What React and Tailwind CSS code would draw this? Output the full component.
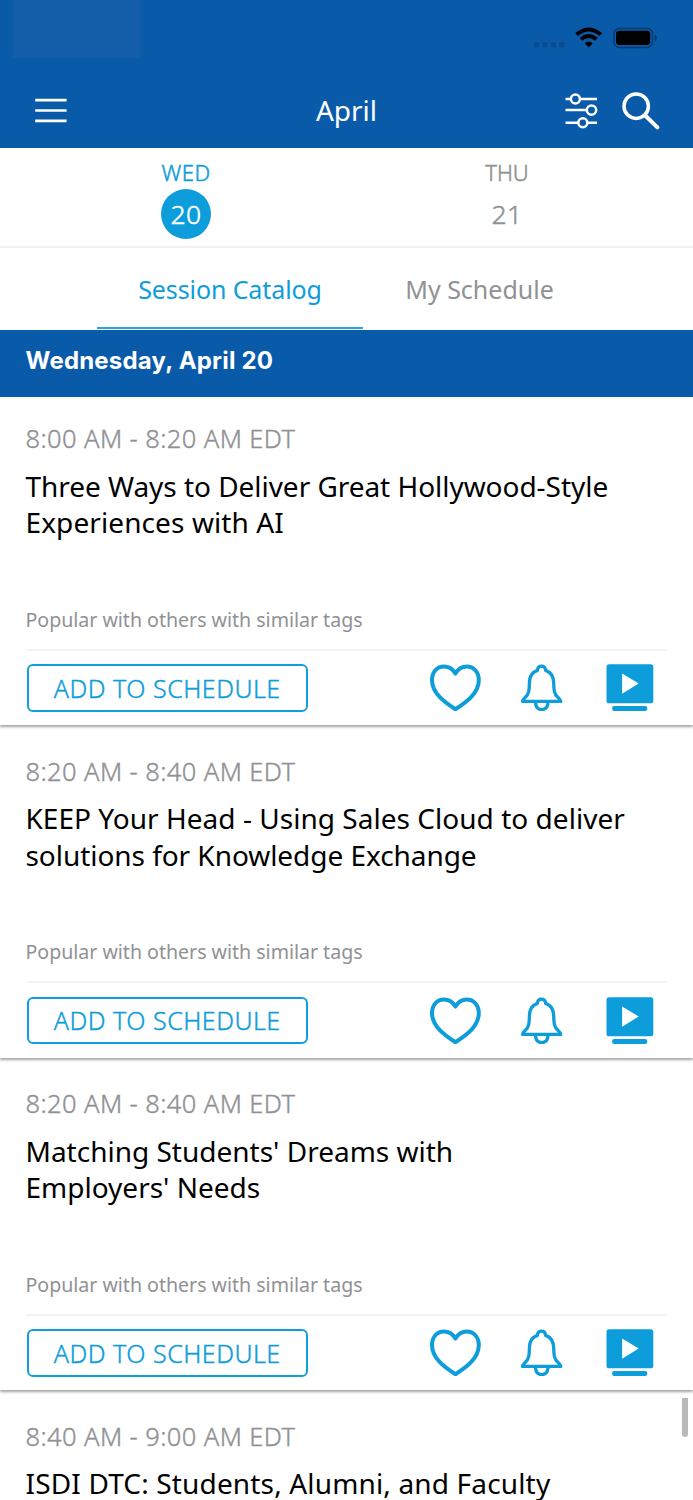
import React from "react";

const sessions = [
  {
    time: "8:00 AM - 8:20 AM EDT",
    lines: [
      { text: "Three Ways to Deliver Great Hollywood-Style", tracking: "tracking-[-0.04px]" },
      { text: "Experiences with AI", tracking: "tracking-[0.1px]" },
    ],
  },
  {
    time: "8:20 AM - 8:40 AM EDT",
    lines: [
      { text: "KEEP Your Head - Using Sales Cloud to deliver", tracking: "tracking-[0.03px]" },
      { text: "solutions for Knowledge Exchange", tracking: "tracking-[-0.05px]" },
    ],
  },
  {
    time: "8:20 AM - 8:40 AM EDT",
    lines: [
      { text: "Matching Students' Dreams with", tracking: "tracking-[0px]" },
      { text: "Employers' Needs", tracking: "tracking-[0px]" },
    ],
  },
  {
    time: "8:40 AM - 9:00 AM EDT",
    lines: [{ text: "ISDI DTC: Students, Alumni, and Faculty", tracking: "tracking-[0.16px]" }],
  },
];

function StatusIcons() {
  return (
    <svg className="block h-6 w-[126px]" viewBox="532 26 126 24" fill="none">
      <g fill="#084b8f">
        <rect x="534" y="42" width="5.4" height="5.6" rx="1.6" />
        <rect x="542.4" y="42" width="5.4" height="5.6" rx="1.6" />
        <rect x="550.8" y="42" width="5.4" height="5.6" rx="1.6" />
        <rect x="559" y="42" width="5.4" height="5.6" rx="1.6" />
      </g>
      <g stroke="#000" strokeWidth="3.9">
        <path d="M576.6 34.6Q588.7 24.4 600.8 34.6" />
        <path d="M581 39.4Q588.7 32.6 596.4 39.4" />
      </g>
      <path d="M584.6 43.2Q588.7 39.8 592.8 43.2L588.7 47.4Z" fill="#000" />
      <rect x="613.9" y="28.4" width="38.6" height="19" rx="5.5" stroke="#08396c" strokeWidth="1.5" />
      <rect x="616" y="30.8" width="34.2" height="14.2" rx="3.4" fill="#000" />
      <path d="M655 34.6C657.6 36 657.6 40 655 41.4Z" fill="#08396c" />
    </svg>
  );
}

function MenuIcon() {
  return (
    <svg className="block h-[26px] w-8" viewBox="35 97.4 32 26" stroke="#fff" strokeWidth="2.7">
      <path d="M35.2 99.6H66.6M35.2 109.9H66.6M35.2 120.2H66.6" />
    </svg>
  );
}

function FilterIcon() {
  return (
    <svg className="block h-9 w-9" viewBox="563 92.5 36 36" fill="none" stroke="#fff" strokeWidth="2.5">
      <path d="M565.5 98.5H571M580 98.5H597M565.5 109.6H587M565.5 122.3H578.3M587.3 122.3H597" />
      <circle cx="575.4" cy="98.5" r="4.5" />
      <circle cx="591.5" cy="109.6" r="4.7" />
      <circle cx="582.8" cy="122.3" r="4.5" />
    </svg>
  );
}

function SearchIcon() {
  return (
    <svg className="block h-10 w-10" viewBox="621 90.8 40 40" fill="none" stroke="#fff">
      <circle cx="636.2" cy="106" r="12.2" strokeWidth="3.5" />
      <path d="M645 115L657.4 127.2" strokeWidth="4" strokeLinecap="round" />
    </svg>
  );
}

function HeartIcon() {
  return (
    <svg className="block h-12 w-[52px]" viewBox="429 663 52 48" fill="none" stroke="#0d9ddb" strokeWidth="4" strokeLinejoin="round">
      <path d="M455.4 673.6C452.6 668.6 448.4 666.5 444 666.5C437 666.5 432 672 432 680C432 693.5 445 702.5 455.4 709.2C466 702.5 478.8 693.5 478.8 680C478.8 672 473.6 666.5 466.8 666.5C462.4 666.5 458.2 668.6 455.4 673.6Z" />
    </svg>
  );
}

function BellIcon() {
  return (
    <svg className="block h-12 w-[43px]" viewBox="519.5 663.2 43 48" fill="none" stroke="#0d9ddb" strokeWidth="3.3" strokeLinejoin="round">
      <path d="M541 666.3C538.7 666.3 537.1 667.8 536.9 670.6C531.5 672.5 529 677.5 528.9 683C528.8 690.5 528.5 694 524.8 697.5C523 699.3 522 700.3 522 701.6H560.3C560.3 700.3 559.2 699.3 557.4 697.5C553.6 694 553.4 690.5 553.2 683C553 677.5 550.6 672.5 545.1 670.6C544.9 667.8 543.3 666.3 541 666.3Z" />
      <path d="M534.9 702C535 707 537.4 709.8 541.2 709.8C545 709.8 547.5 707 547.6 702" />
    </svg>
  );
}

function PlayIcon() {
  return (
    <svg className="block h-12 w-12" viewBox="605.5 663.6 48 48" fill="#0d9ddb">
      <rect x="606" y="664.8" width="46.8" height="39.1" rx="2.6" />
      <rect x="611.6" y="706.6" width="35.2" height="5" rx="2.2" />
      <path d="M621.6 674.1V694.3L638.2 684.2Z" fill="#fff" />
    </svg>
  );
}

function SessionCard({ session, first }) {
  return (
    <article
      className={
        "w-full shrink-0 bg-white shadow-[0_2px_2.5px_rgba(0,0,0,0.36)] " +
        (first ? "h-[328px] pt-[24px]" : "h-[325px] pt-[21px]")
      }
    >
      <div className="pr-[27px] pl-[25.5px]">
        <p className="h-[34px] text-[25.5px] leading-[34px] font-light tracking-[0.4px] whitespace-nowrap text-[#919195] [-webkit-text-stroke:0.4px]">
          {session.time}
        </p>
        <h2 className="mt-[12.5px] h-[131px] text-[28px] leading-[36.3px] font-normal text-black">
          {session.lines.map((line) => (
            <span key={line.text} className={"block whitespace-nowrap " + line.tracking}>
              {line.text}
            </span>
          ))}
        </h2>
        <p className="mt-[5px] h-8 text-[19.6px] leading-8 font-normal tracking-[-0.02px] whitespace-nowrap text-[#919195]">
          Popular with others with similar tags
        </p>
        <div className="mt-[13px] h-[2px] bg-[#f2f2f7]" />
        <div className="flex items-center pt-3">
          <button className="mt-[1.5px] ml-[1px] h-[47.5px] w-[281.5px] rounded-[6px] border-2 border-[#119fdc] text-[25px] leading-[43px] font-light tracking-[0.5px] whitespace-nowrap text-[#0d9ddb] [-webkit-text-stroke:0.4px]">
            ADD TO SCHEDULE
          </button>
          <div className="ml-auto flex items-center pr-[12.5px]">
            <HeartIcon />
            <span className="w-[38.5px]" />
            <BellIcon />
            <span className="w-[43px]" />
            <PlayIcon />
          </div>
        </div>
      </div>
    </article>
  );
}

export default function App() {
  return (
    <div className="relative flex h-[1500px] w-[693px] flex-col overflow-hidden bg-white font-['Noto_Sans',sans-serif]">
      <header className="relative flex h-[147.5px] shrink-0 flex-col bg-[#0a5aaa]">
        <div className="flex h-[73px] items-start justify-between pl-[13px] pr-[35px]">
          <div className="h-[58px] w-[128px] bg-[#145da8]" />
          <div className="pt-[26px]">
            <StatusIcons />
          </div>
        </div>
        <div className="grid grid-cols-3 items-center pt-[17.5px]">
          <div className="pl-[35px]">
            <MenuIcon />
          </div>
          <h1 className="-mt-[2px] text-center text-[28px] leading-10 font-normal text-white">April</h1>
          <div className="flex items-center justify-end gap-[22px] pr-8">
            <FilterIcon />
            <SearchIcon />
          </div>
        </div>
      </header>

      <section className="flex h-[100px] shrink-0 justify-center border-b-2 border-[#f0f0f5]">
        <div className="flex w-[321px] flex-col items-center">
          <span className="mt-[10px] text-[22px] leading-7 font-light tracking-[0.5px] text-[#0d9ddb] [-webkit-text-stroke:0.5px]">WED</span>
          <span className="mt-[3.5px] flex size-[50px] items-center justify-center rounded-full bg-[#0d9ddb] text-[26.5px] leading-[48px] font-light tracking-[0.3px] text-white [-webkit-text-stroke:0.5px]">
            20
          </span>
        </div>
        <div className="flex w-[321px] flex-col items-center">
          <span className="mt-[10px] text-[22px] leading-7 font-light text-[#919195] [-webkit-text-stroke:0.5px]">THU</span>
          <span className="mt-[3.5px] text-[26.5px] leading-[50px] font-light tracking-[0.3px] text-[#919195] [-webkit-text-stroke:0.5px]">21</span>
        </div>
      </section>

      <nav className="flex h-[82.8px] shrink-0 pl-[97px]">
        <div className="h-[81.5px] w-[266px] border-b-2 border-[#25a6df] pt-[21px] text-center text-[25px] leading-10 font-normal tracking-[-0.1px] whitespace-nowrap text-[#0d9ddb]">
          Session Catalog
        </div>
        <div className="w-[233px] pt-[21px] text-center text-[25px] leading-10 font-normal whitespace-nowrap text-[#919195]">
          My Schedule
        </div>
      </nav>

      <div className="h-[67px] shrink-0 bg-[#0a5aaa] pt-[11px] pl-[25.5px] font-['Inter',sans-serif] text-[24px] leading-10 font-bold tracking-[0.2px] whitespace-nowrap text-white">
        Wednesday, April 20
      </div>

      <main className="flex flex-col gap-[7.5px]">
        {sessions.map((session, index) => (
          <SessionCard key={session.time + index} session={session} first={index === 0} />
        ))}
      </main>

      <div className="absolute top-[1398px] right-[5px] h-[39px] w-[6px] rounded-b-[3px] bg-[#b8b8b8]" />
    </div>
  );
}
